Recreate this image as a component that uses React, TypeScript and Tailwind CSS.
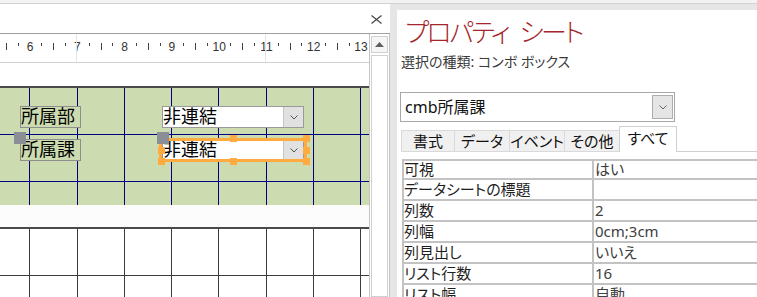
import React from "react";

const VX = [29, 77, 124, 171, 218, 266, 313, 360];
const NUMS = [0, 6, 7, 8, 9, 10, 11, 12, 13];

function Ruler() {
  return (
    <div className="relative h-[29px] shrink-0 overflow-hidden border-b border-[#d0d0d0] bg-white font-['Liberation_Sans',sans-serif]">
      <div className="absolute left-[76px] top-0 h-full w-px bg-[#e4e4e4]" />
      <div className="absolute left-[265px] top-0 h-full w-px bg-[#e4e4e4]" />
      <div className="ml-[-23px] flex h-full">
        {NUMS.map((n) => (
          <div key={n} className="flex h-full w-[47.25px] shrink-0">
            <div className="flex w-[11.8125px] justify-center whitespace-nowrap pt-[7px] text-[12px] leading-[12px] text-[#333]">
              {n === 0 ? "" : n}
            </div>
            <div className="flex w-[11.8125px] justify-center pt-[9px]">
              <div className="h-[3px] w-px bg-[#444]" />
            </div>
            <div className="flex w-[11.8125px] justify-center pt-[9px]">
              <div className="h-[7px] w-px bg-[#444]" />
            </div>
            <div className="flex w-[11.8125px] justify-center pt-[9px]">
              <div className="h-[3px] w-px bg-[#444]" />
            </div>
          </div>
        ))}
      </div>
    </div>
  );
}

function Chevron({ color = "#555" }: { color?: string }) {
  return (
    <svg width="8" height="5" viewBox="0 0 8 5">
      <path d="M0.5 0.5 L4 4 L7.5 0.5" fill="none" stroke={color} strokeWidth="1" />
    </svg>
  );
}

const rows: [string, string][] = [
  ["可視", "はい"],
  ["データシートの標題", ""],
  ["列数", "2"],
  ["列幅", "0cm;3cm"],
  ["列見出し", "いいえ"],
  ["リスト行数", "16"],
  ["リスト幅", "自動"],
];

export default function App() {
  return (
    <div className="flex h-[297px] w-[757px] flex-col overflow-hidden bg-white">
      <div className="h-[3px] shrink-0 bg-[#f3f3f3]" />
      <div className="h-px shrink-0 bg-[#d2d2d2]" />
      <div className="flex min-h-0 flex-1">
        {/* Left: form design */}
        <div className="flex w-[390px] shrink-0 flex-col">
          <div className="flex h-[29px] shrink-0 items-start justify-end bg-white pr-[8px] pt-[11px]">
            <svg width="11" height="9" viewBox="0 0 11 9">
              <path d="M0.5 0.5 L10.5 8.5 M10.5 0.5 L0.5 8.5" stroke="#444" strokeWidth="1.2" />
            </svg>
          </div>
          <div className="h-px shrink-0 bg-[#a0a0a0]" />
          <div className="flex min-h-0 flex-1">
            <div className="flex w-[369px] shrink-0 flex-col overflow-hidden">
              <Ruler />
              <div className="h-[23px] shrink-0 bg-white" />
              <div className="h-[2px] shrink-0 bg-[#4a4a4a]" />
              <div className="relative h-[117px] shrink-0 bg-[#cddcb0] font-['Noto_Sans_CJK_JP',sans-serif]">
                <svg className="absolute left-0 top-0" width="369" height="117">
                  {VX.map((x) => (
                    <rect key={x} x={x} y={0} width={1} height={117} fill="#000080" />
                  ))}
                  <rect x={0} y={46} width={369} height={1} fill="#000080" />
                  <rect x={0} y={93} width={369} height={1} fill="#000080" />
                </svg>
                <div className="absolute left-[20px] top-[18px] h-[22px] w-[61px] whitespace-nowrap border border-[#8e8e8e] bg-[#cddcb0] text-[18px] leading-[17px] text-black">
                  所属部
                </div>
                <div className="absolute left-[20px] top-[51px] h-[22px] w-[61px] whitespace-nowrap border border-[#8e8e8e] bg-[#cddcb0] text-[18px] leading-[17px] text-black">
                  所属課
                </div>
                <div className="absolute left-[162px] top-[18px] flex h-[22px] w-[142px] border border-[#9a9a9a] bg-white">
                  <div className="flex-1 whitespace-nowrap text-[18px] leading-[17px] text-black">非連結</div>
                  <div className="flex h-full w-[20px] items-center justify-center border-l border-[#c4c4c4] bg-[#e1e1e1]">
                    <Chevron />
                  </div>
                </div>
                <div className="absolute left-[162px] top-[51px] flex h-[22px] w-[142px] border border-[#9a9a9a] bg-white">
                  <div className="flex-1 whitespace-nowrap text-[18px] leading-[17px] text-black">非連結</div>
                  <div className="flex h-full w-[20px] items-center justify-center border-l border-[#c4c4c4] bg-[#e1e1e1]">
                    <Chevron />
                  </div>
                </div>
                {/* selection frame */}
                <div className="absolute left-[159px] top-[50px] h-[24px] w-[148px] border-[3px] border-[#ffab40]" />
                <div className="absolute left-[303px] top-[47px] h-[7px] w-[7px] bg-[#ffab40]" />
                <div className="absolute left-[303px] top-[59px] h-[7px] w-[7px] bg-[#ffab40]" />
                <div className="absolute left-[303px] top-[70px] h-[7px] w-[7px] bg-[#ffab40]" />
                <div className="absolute left-[230px] top-[47px] h-[7px] w-[7px] bg-[#ffab40]" />
                <div className="absolute left-[230px] top-[70px] h-[7px] w-[7px] bg-[#ffab40]" />
                <div className="absolute left-[158px] top-[59px] h-[7px] w-[7px] bg-[#ffab40]" />
                <div className="absolute left-[158px] top-[70px] h-[7px] w-[7px] bg-[#ffab40]" />
                <div className="absolute left-[14px] top-[44px] h-[12px] w-[12px] bg-[#8b8e94]" />
                <div className="absolute left-[157px] top-[44px] h-[12px] w-[12px] bg-[#8b8e94]" />
              </div>
              <div className="h-[22px] shrink-0 bg-[#fcfcfc]" />
              <div className="h-[2px] shrink-0 bg-[#4a4a4a]" />
              <div className="relative flex-1 bg-white">
                <svg className="absolute left-0 top-0" width="369" height="70">
                  {VX.map((x) => (
                    <rect key={x} x={x} y={0} width={1} height={70} fill="#3c3c3c" />
                  ))}
                  <rect x={0} y={46} width={369} height={1} fill="#3c3c3c" />
                </svg>
              </div>
            </div>
            {/* vertical scrollbar */}
            <div className="flex w-[21px] shrink-0 flex-col border-l border-r border-[#c4c4c4] bg-white">
              <div className="ml-px mt-[2px] flex h-[17px] w-[17px] items-center justify-center border border-[#d0d0d0] bg-[#f5f5f5]">
                <svg width="9" height="5" viewBox="0 0 9 5">
                  <path d="M0 5 L4.5 0 L9 5 Z" fill="#606060" />
                </svg>
              </div>
              <div className="ml-px mt-[2px] w-[17px] flex-1 border border-[#d0d0d0] bg-white" />
            </div>
          </div>
        </div>

        {/* Right: property sheet */}
        <div className="flex min-w-0 flex-1 flex-col bg-[#e6e6e6] pl-[7px] pt-[6px]">
          <div className="flex min-h-0 flex-1 flex-col overflow-hidden bg-white font-['Noto_Sans','Noto_Sans_CJK_JP',sans-serif] [font-feature-settings:'palt']">
            <div className="ml-[8px] mt-[7px] h-[30px] shrink-0 whitespace-nowrap text-[26px] font-light leading-[30px] tracking-[-2.5px] text-[#a4262c] [word-spacing:7px]">
              プロパティ シート
            </div>
            <div className="ml-[4px] mt-[6px] h-[18px] shrink-0 whitespace-nowrap text-[14px] leading-[18px] text-[#3a3a3a]">
              選択の種類: コンボ ボックス
            </div>
            <div className="ml-[3px] mt-[21px] flex h-[30px] w-[275px] shrink-0 items-center border border-[#a8a8a8] pl-[4px] pr-px">
              <div className="flex-1 whitespace-nowrap text-[16px] leading-[20px] text-[#111]">cmb所属課</div>
              <div className="flex h-[24px] w-[21px] items-center justify-center border border-[#adadad] bg-[#e5e5e5]">
                <Chevron color="#666" />
              </div>
            </div>
            <div className="ml-[4px] mt-[4px] flex h-[26px] shrink-0 text-[15px] text-[#111]">
              {[
                ["書式", "w-[53px]"],
                ["データ", "w-[55px]"],
                ["イベント", "w-[55px]"],
                ["その他", "w-[55px]"],
              ].map(([t, w]) => (
                <div
                  key={t}
                  className={`${w} mt-[4px] flex h-[22px] items-center justify-center whitespace-nowrap border-b border-l border-t border-[#d9d9d9] bg-[#f0f0f0] leading-[20px]`}
                >
                  {t}
                </div>
              ))}
              <div className="flex h-[26px] w-[58px] items-center justify-center whitespace-nowrap border-l border-r border-t border-[#d0d0d0] bg-white pb-[4px] leading-[20px]">
                すべて
              </div>
              <div className="flex-1 border-b border-[#d0d0d0]" />
            </div>
            <div className="ml-[5px] mt-[7px] flex shrink-0 flex-col border-l-2 border-t-2 border-[#c3c3c3] text-[15px]">
              {rows.map(([k, v], i) => (
                <div key={k} className={`flex ${i === 0 ? "h-[19px]" : "h-[21px]"} border-b-2 border-[#c3c3c3]`}>
                  <div className="flex w-[188px] items-center whitespace-nowrap leading-[19px] text-[#1f1f1f]">{k}</div>
                  <div className="flex flex-1 items-center whitespace-nowrap border-l-2 border-[#c3c3c3] pl-px leading-[19px] text-[#404040]">
                    {v}
                  </div>
                </div>
              ))}
            </div>
          </div>
        </div>
      </div>
    </div>
  );
}
